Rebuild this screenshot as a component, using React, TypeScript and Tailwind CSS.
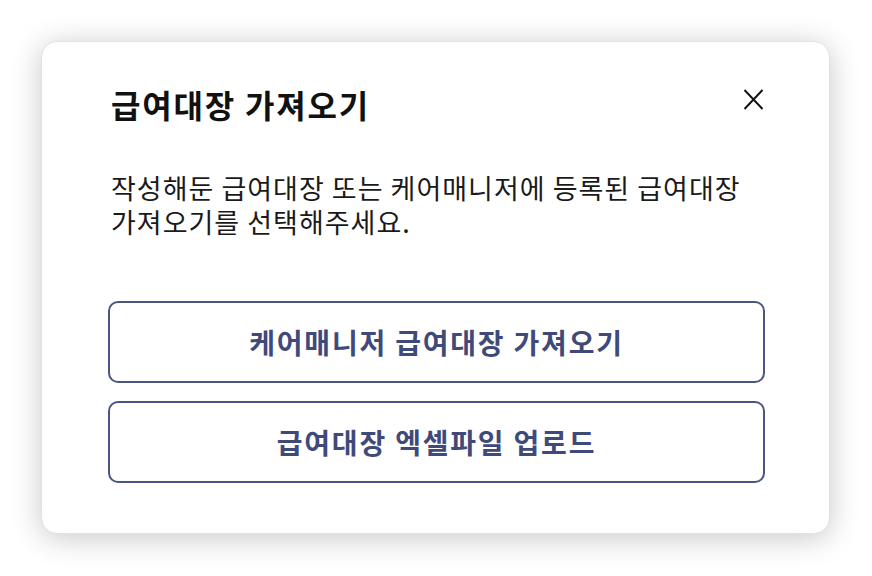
const font = { fontFamily: '"Noto Sans CJK KR", "Noto Sans", sans-serif' };

function ImportButton({ label }: { label: string }) {
  return (
    <button className="flex h-[82px] w-full items-center justify-center rounded-[10px] border-2 border-[#4b5583] bg-white text-[28px] font-bold tracking-[1.8px] text-[#3f4a7a]">
      {label}
    </button>
  );
}

function CloseIcon() {
  return (
    <svg width="21" height="21" viewBox="0 0 21 21" fill="none" stroke="#111" strokeWidth="1.9">
      <path d="M1.5 1 L19.5 20 M19.5 1 L1.5 20" />
    </svg>
  );
}

export default function App() {
  return (
    <div className="min-h-[576px] w-full bg-white" style={font}>
      <div className="px-[41px] pt-[41px]">
        <div className="w-[789px] rounded-[16px] border border-[#e2e2e2] bg-white pt-[44px] pr-[64px] pb-[50px] pl-[66px] shadow-[0_4px_30px_rgba(0,0,0,0.22)]">
          <div className="flex h-[36px] items-center justify-between">
            <h2 className="ml-[3px] text-[32px] leading-[36px] font-bold tracking-[1.8px] text-[#111]">
              급여대장 가져오기
            </h2>
            <button className="mr-[1px] mb-[10px]">
              <CloseIcon />
            </button>
          </div>

          <div className="mt-[49px] ml-[3px] flex flex-col text-[27px] leading-[34px] tracking-[1px] text-[#1a1a1a]">
            <span>작성해둔 급여대장 또는 케어매니저에 등록된 급여대장</span>
            <span>가져오기를 선택해주세요.</span>
          </div>

          <div className="mt-[62px] flex flex-col gap-[18px]">
            <ImportButton label="케어매니저 급여대장 가져오기" />
            <ImportButton label="급여대장 엑셀파일 업로드" />
          </div>
        </div>
      </div>
    </div>
  );
}
